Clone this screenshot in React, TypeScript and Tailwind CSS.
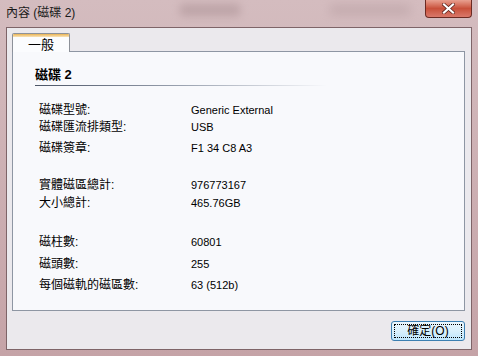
import React from 'react'

const font = { fontFamily: '"Liberation Sans", "Noto Sans CJK TC", sans-serif' }

type Row = { label: string; value: string; gap: string }

const rows: Row[] = [
  { label: '磁碟型號:', value: 'Generic External', gap: 'mt-[16px]' },
  { label: '磁碟匯流排類型:', value: 'USB', gap: 'mt-[1px]' },
  { label: '磁碟簽章:', value: 'F1 34 C8 A3', gap: 'mt-[5px]' },
  { label: '實體磁區總計:', value: '976773167', gap: 'mt-[21px]' },
  { label: '大小總計:', value: '465.76GB', gap: 'mt-[2px]' },
  { label: '磁柱數:', value: '60801', gap: 'mt-[23px]' },
  { label: '磁頭數:', value: '255', gap: 'mt-[6px]' },
  { label: '每個磁軌的磁區數:', value: '63 (512b)', gap: 'mt-[5px]' },
]

export default function App() {
  return (
    <div
      className="w-[478px] h-[356px] flex flex-col bg-gradient-to-b from-[#d4bcbf] to-[#c5a3a7] text-[12px] text-black overflow-hidden"
      style={font}
    >
      {/* title bar */}
      <div className="h-[27px] flex items-start justify-between relative">
        <div className="absolute left-[180px] top-[4px] w-[60px] h-[12px] bg-[#9c8286] opacity-40 blur-[4px]" />
        <div className="absolute left-[330px] top-[4px] w-[80px] h-[12px] bg-[#a88e92] opacity-30 blur-[5px]" />
        <span className="relative pl-[6px] pt-[5px] leading-[16px] text-[#1a1a1a]">內容 (磁碟 2)</span>
        <div className="relative mr-[6px] w-[47px] h-[18px] rounded-b-[4px] border border-t-0 border-[#6b2a22] bg-gradient-to-b from-[#e8a090] via-[#c8503a] to-[#d9786a] flex items-center justify-center">
          <svg width="13" height="11" viewBox="0 0 13 11">
            <path d="M2 1.5 L11 9.5 M11 1.5 L2 9.5" stroke="#5a1f18" strokeWidth="3.6" strokeLinecap="square" />
            <path d="M2 1.5 L11 9.5 M11 1.5 L2 9.5" stroke="#ffffff" strokeWidth="2.2" strokeLinecap="square" />
          </svg>
        </div>
      </div>

      {/* client area */}
      <div className="flex-1 mx-[6px] mb-[6px] border border-[#7e6468] bg-[#ebe9ed] flex flex-col pl-[5px] pr-[6px] pt-[5px]">
        {/* tab strip */}
        <div className="flex h-[18px] relative z-10">
          <div className="w-[58px] h-[19px] border border-b-0 border-[#8d9199] rounded-t-[2px] bg-[#fbfcfe] flex flex-col overflow-hidden">
            <div className="h-[3px] bg-gradient-to-b from-[#e9b24e] to-[#f8e3b8]" />
            <div className="flex-1 flex items-center justify-center text-[13px] leading-none pb-[1px]">一般</div>
          </div>
        </div>

        {/* panel */}
        <div className="h-[260px] border border-[#8e96a3] bg-[#f8f9fc] pl-[22px] pt-[15px]">
          <div className="leading-[16px] font-bold text-[13px]">磁碟 2</div>
          <div className="mt-[2px] h-[1px] w-[292px] bg-gradient-to-r from-[#4c5566] via-[#9aa2b0] to-transparent" />
          {rows.map((r) => (
            <div key={r.label} className={`${r.gap} h-[16px] flex items-center pl-[4px]`}>
              <span className="w-[152px]">{r.label}</span>
              <span className="text-[11px]">{r.value}</span>
            </div>
          ))}
        </div>

        {/* buttons */}
        <div className="flex justify-end mt-[10px]">
          <button className="w-[74px] h-[20px] border border-[#3c7fb1] rounded-[3px] bg-gradient-to-b from-[#eaf6fd] via-[#d9f0fc] to-[#bee6fd] p-[2px]">
            <div className="w-full h-full border border-dotted border-black flex items-center justify-center leading-none">
              確定(O)
            </div>
          </button>
        </div>
      </div>
    </div>
  )
}
